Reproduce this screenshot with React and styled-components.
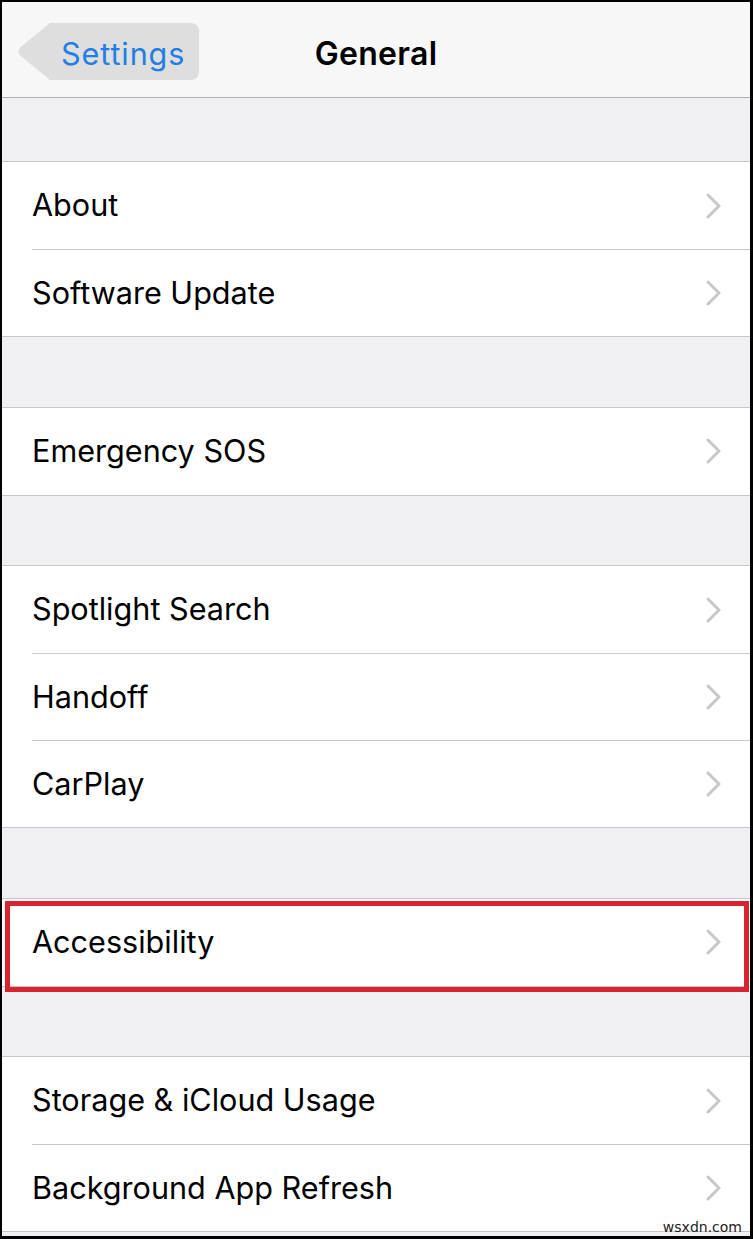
import styled, { createGlobalStyle } from "styled-components"

const Global = createGlobalStyle`
    html, body{
        margin: 0;
        padding: 0;
        background: #000;
    }
    *{
        box-sizing: border-box;
    }
`

const Frame = styled.div`
    position: relative;
    width: 753px;
    height: 1239px;
    overflow: hidden;
    border-style: solid;
    border-color: #000;
    border-width: 2px 3px 3px 2px;
    background: #efeff4;
    font-family: 'Inter', 'Liberation Sans', sans-serif;
    color: #000;
`

const NavBar = styled.header`
    display: grid;
    grid-template-columns: 1fr auto 1fr;
    align-items: center;
    height: 96px;
    background: #f7f7f7;
    border-bottom: 1px solid #b2b2b2;

    h1{
        margin: 0;
        padding-top: 7px;
        font-size: 32px;
        font-weight: 600;
        letter-spacing: 0.3px;
    }
`

const BackButton = styled.div`
    position: relative;
    justify-self: start;
    margin-left: 47px;
    margin-top: 4px;
    height: 57px;
    display: flex;
    align-items: center;
    padding: 3px 14px 0 12px;
    background: #dedede;
    border-radius: 0 8px 8px 0;
    color: #1f7fe5;
    font-size: 30.6px;
    letter-spacing: 0.9px;

    &::before{
        content: '';
        position: absolute;
        left: -33px;
        top: 0;
        width: 34px;
        height: 57px;
        background: #dedede;
        clip-path: polygon(100% 0, 100% 100%, 12% 57%, 6% 50%, 12% 43%);
    }
`

const Gap = styled.div`
    height: ${props => props.h || 69.5}px;
`

const Group = styled.section`
    background: #fff;
    border-top: 1px solid #c8c7cc;
    border-bottom: 1px solid #c8c7cc;
`

const Row = styled.div`
    position: relative;
    padding-left: 30px;

    & + & > div{
        border-top: 1px solid #c8c7cc;
    }
`

const RowInner = styled.div`
    display: flex;
    align-items: center;
    justify-content: space-between;
    height: 87px;
    padding-right: 28px;
    font-size: 30.6px;

    span{
        padding-bottom: 2px;
    }
`

const Highlight = styled.div`
    position: absolute;
    left: 3px;
    right: 1px;
    top: 2px;
    bottom: -6px;
    border: 5px solid #d9232e;
    z-index: 2;
    pointer-events: none;
`

const Watermark = styled.div`
    position: absolute;
    right: 8px;
    bottom: 1px;
    font-family: 'DejaVu Sans', sans-serif;
    font-size: 14px;
    color: #222;
`

const Chevron = () => (
    <svg width="17" height="26" viewBox="0 0 17 26">
        <path d="M3 2 L14 13 L3 24" fill="none" stroke="#c7c7cc" strokeWidth="3" strokeLinecap="round" strokeLinejoin="round" />
    </svg>
)

const sections = [
    ["About", "Software Update"],
    ["Emergency SOS"],
    ["Spotlight Search", "Handoff", "CarPlay"],
    ["Accessibility"],
    ["Storage & iCloud Usage", "Background App Refresh"],
]

export default function App() {
    return (
        <Frame>
            <Global />
            <NavBar>
                <BackButton>Settings</BackButton>
                <h1>General</h1>
                <div />
            </NavBar>
            {sections.map((items, i) => (
                <div key={i}>
                    <Gap h={i === 0 ? 63 : 69.5} />
                    <Group>
                        {items.map(label => (
                            <Row key={label}>
                                {label === "Accessibility" && <Highlight />}
                                <RowInner>
                                    <span>{label}</span>
                                    <Chevron />
                                </RowInner>
                            </Row>
                        ))}
                    </Group>
                </div>
            ))}
            <Watermark>wsxdn.com</Watermark>
        </Frame>
    )
}
